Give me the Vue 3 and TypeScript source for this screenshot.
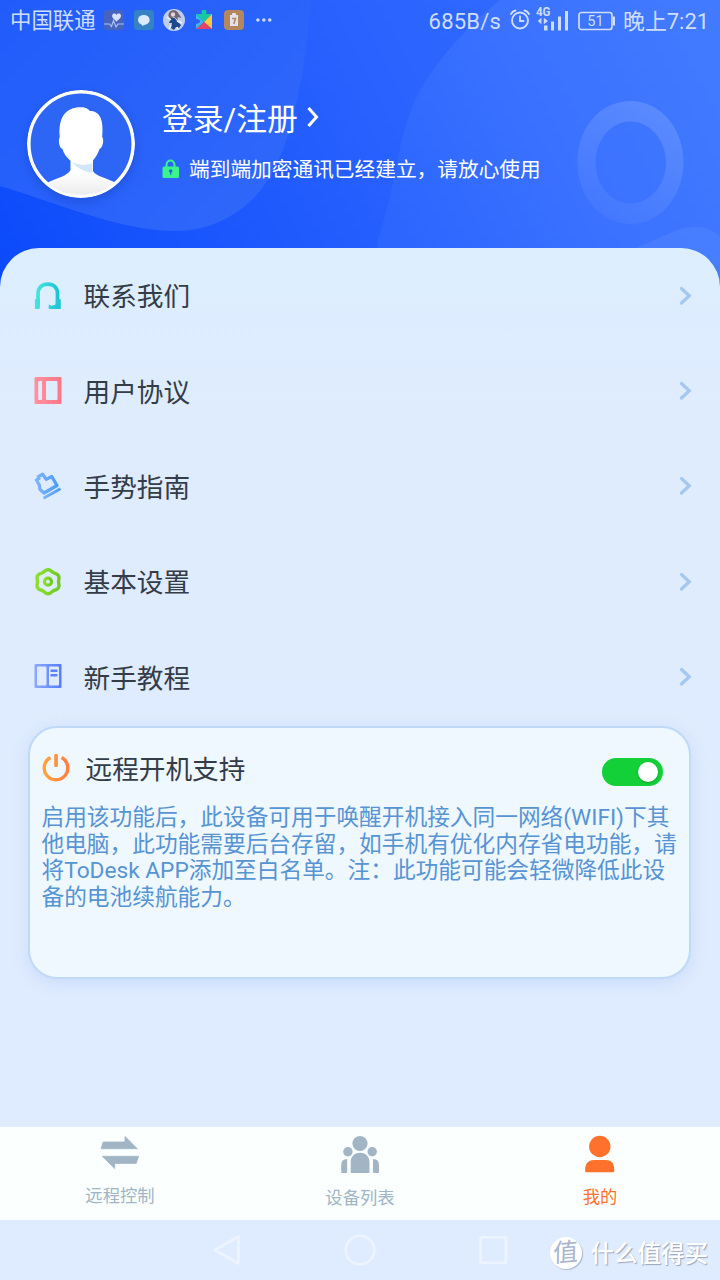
<script setup lang="ts">
interface MenuItem {
  icon: string
  label: string
}

const menu: MenuItem[] = [
  { icon: 'headset', label: '联系我们' },
  { icon: 'agreement', label: '用户协议' },
  { icon: 'gesture', label: '手势指南' },
  { icon: 'settings', label: '基本设置' },
  { icon: 'tutorial', label: '新手教程' },
]

const notice: string[] = [
  '启用该功能后，此设备可用于唤醒开机接入同一网络(WIFI)下其',
  '他电脑，此功能需要后台存留，如手机有优化内存省电功能，请',
  '将ToDesk APP添加至白名单。注：此功能可能会轻微降低此设',
  '备的电池续航能力。',
]

// Six-lobed gear outline around the centre of a 28 unit box.
function gearOutline(): string {
  const points: string[] = []
  for (let deg = 0; deg < 360; deg += 5) {
    const a = (deg * Math.PI) / 180
    const r = 11.3 + 0.75 * Math.cos(6 * a)
    points.push(`${(14 + r * Math.sin(a)).toFixed(2)} ${(13.7 - r * Math.cos(a)).toFixed(2)}`)
  }
  return `M${points.join('L')}Z`
}
const gear = gearOutline()
</script>

<template>
  <div class="screen">
    <header class="header">
      <svg class="backdrop" viewBox="0 0 720 292" aria-hidden="true">
        <defs>
          <linearGradient id="base" gradientUnits="userSpaceOnUse" x1="0" y1="270" x2="560" y2="0">
            <stop offset="0" stop-color="#0c4bfb" />
            <stop offset="0.65" stop-color="#2861fe" />
            <stop offset="1" stop-color="#326bfe" />
          </linearGradient>
          <linearGradient id="leafFill" gradientUnits="userSpaceOnUse" x1="0" y1="0" x2="250" y2="220">
            <stop offset="0" stop-color="#215cfb" />
            <stop offset="1" stop-color="#2f67fa" />
          </linearGradient>
          <linearGradient id="hillFill" gradientUnits="userSpaceOnUse" x1="385" y1="200" x2="690" y2="40">
            <stop offset="0" stop-color="#2c66fe" />
            <stop offset="0.5" stop-color="#3a71ff" />
            <stop offset="1" stop-color="#4179ff" />
          </linearGradient>
          <linearGradient id="ringFill" x1="0.7" y1="0" x2="0.3" y2="1">
            <stop offset="0" stop-color="#fff" stop-opacity="0.15" />
            <stop offset="1" stop-color="#fff" stop-opacity="0.04" />
          </linearGradient>
        </defs>
        <rect width="720" height="292" fill="url(#base)" />
        <path d="M0 0H312C307 30 307 55 300 85C293 120 287 148 269 178C252 207 217 231 176 231C121 231 60 204 0 186Z" fill="url(#leafFill)" />
        <path d="M500 0C465 28 440 58 422 87C397 131 400 170 378 240L372 292H720V0Z" fill="url(#hillFill)" />
        <path fill-rule="evenodd" d="M630.500 101C660 101 683.500 128 683.500 162S660 224 630.500 224S577.500 197 577.500 162S601 101 630.500 101ZM630.500 121.500C611 121.500 595.500 140 595.500 162.500S611 203.500 630.500 203.500S666 185 666 162.500S650 121.500 630.500 121.500Z" fill="url(#ringFill)" />
        <path d="M636 248L670 233Q700 219 720 236V292H636Z" fill="#4c80ff" opacity="0.7" />
      </svg>

      <div class="status">
        <span class="carrier">中国联通</span>
        <div class="notifications">
          <svg viewBox="0 0 20 20">
            <rect width="20" height="20" rx="4" fill="#4664bd" />
            <path d="M12.500 11.500L8.800 8C6.500 4 11 2 12.500 5C14 2 18.800 4 16.300 8Z" fill="#d7e2ff" />
            <path d="M0 14H5.500L7.500 16.500L9.500 10.500L12 17L14 14H20" fill="none" stroke="#a9c0f5" stroke-width="1.200" />
          </svg>
          <svg viewBox="0 0 20 20">
            <rect width="20" height="20" rx="4" fill="#3582c5" />
            <ellipse cx="9.800" cy="9.900" rx="5.800" ry="5" fill="#dceaff" />
            <path d="M7 13.500L8.500 16L12.500 13.500Z" fill="#dceaff" />
          </svg>
          <svg class="portrait" viewBox="0 0 22 22">
            <circle cx="11" cy="11" r="11" fill="#bfcfe9" />
            <path d="M5.500 7C5 1 12 -0.500 14.500 3L18.500 9L14.500 8L15 11L11 8L7 10Z" fill="#6f6470" />
            <circle cx="10" cy="5.500" r="2.200" fill="#e5d2da" />
            <path d="M8 9L11.500 9L14 12L18 16L16 19L13 18L11 21L8 19L9 14L6 14Z" fill="#1c4791" />
            <path d="M4 8L8 11M14 12L19 14M8 16L6 20M14 18L15 20.500" stroke="#f0f3ff" stroke-width="1.500" />
          </svg>
          <svg viewBox="0 0 20 20">
            <path d="M2 4H8Q6.500 -0.500 10 -0.500T12 4H18L10 12Z" fill="#17c9a0" />
            <path d="M2 4L10 12L2 19V14Q6 13.500 6 11.300T2 9Z" fill="#3abbf0" />
            <path d="M18 4V19L10 12Z" fill="#ffc83e" />
            <path d="M2 19L10 12L18 19Z" fill="#e44466" />
          </svg>
          <svg viewBox="0 0 20 20">
            <rect width="20" height="20" rx="4" fill="#b4875f" />
            <path d="M6 5H14V16H6Z" fill="#e3e3ef" />
            <rect x="8" y="3" width="4" height="3" rx="1" fill="#e3e3ef" />
            <path d="M8 8.500H11.500L9.800 14" fill="none" stroke="#b4875f" stroke-width="1.600" />
          </svg>
          <svg class="more" viewBox="0 0 16 20">
            <g fill="#c9d9ff"><circle cx="1.900" cy="10" r="1.800" /><circle cx="7.800" cy="10" r="1.800" /><circle cx="13.700" cy="10" r="1.800" /></g>
          </svg>
        </div>
        <div class="signals">
          <span class="speed">685B/s</span>
          <svg class="alarm" viewBox="0 0 20 22">
            <g fill="none" stroke="#cfddff" stroke-width="1.900" stroke-linecap="round">
              <circle cx="10" cy="11.500" r="8" /><path d="M10 7.500V12H13.500M1 5Q2.500 2 5.500 1.500M19 5Q17.500 2 14.500 1.500" />
            </g>
          </svg>
          <svg class="cell" viewBox="0 0 34 28">
            <text x="0" y="10.500" class="network" textLength="14.500" lengthAdjust="spacingAndGlyphs">4G</text>
            <path d="M8 20.500H11.500V25.500H8ZM15 16.500H18V25.500H15ZM22 11.500H25V25.500H22ZM29 6H32V25.500H29Z" fill="#cfddff" />
            <path d="M1.800 16L5.400 12.800V19.200ZM12 16L7.800 12.800V19.200Z" fill="#cfddff" />
          </svg>
          <svg class="battery" viewBox="0 0 38 20">
            <rect x="1" y="1.500" width="33" height="17" rx="2.500" fill="none" stroke="#cfddff" stroke-width="1.700" />
            <path d="M35 5.500H37V14.500H35Z" fill="#cfddff" />
            <text x="17.500" y="15.200" class="charge" text-anchor="middle">51</text>
          </svg>
          <span class="clock">晚上7:21</span>
        </div>
      </div>

      <div class="profile">
        <svg class="avatar" viewBox="0 0 108 108">
          <defs>
            <clipPath id="face"><circle cx="54" cy="54" r="51" /></clipPath>
            <linearGradient id="bust" x1="0" y1="0" x2="0" y2="1"><stop offset="0.4" stop-color="#fff" /><stop offset="1" stop-color="#e9e9eb" /></linearGradient>
          </defs>
          <circle cx="54" cy="54" r="52" fill="#2d66f5" />
          <g clip-path="url(#face)">
            <path d="M43.500 66V80C41 86 29 88 20 93V108H89V93C80 88 68 86 66 81V66Z" fill="url(#bust)" />
            <path d="M45 72Q56 77 65.500 73V83Q52 81 45 72Z" fill="#d1e8fa" />
            <path d="M32.800 47C31 28 38 17.300 54 17.300C59 17.300 61 19 63 21C72 21 77 28 75.200 47C77.500 50 75.500 58 72.500 59C69.500 68 64 74.500 56 74.500C46 74.500 38 68 35.500 59C32 58 31 50 32.800 47Z" fill="#fff" />
          </g>
          <circle cx="54" cy="54" r="52.200" fill="none" stroke="#fff" stroke-width="3.600" />
        </svg>
        <div class="account">
          <div class="login">
            <span>登录/注册</span>
            <svg viewBox="0 0 14 22"><path d="M2.500 2L10.500 11L2.500 20" fill="none" stroke="#fff" stroke-width="3" /></svg>
          </div>
          <div class="secure">
            <svg viewBox="0 0 18 20">
              <path d="M4.500 9V6C4.500 0 12.500 0 12.500 6V9" fill="none" stroke="#38f48b" stroke-width="2" />
              <rect x="0.500" y="7.500" width="16.500" height="11.500" rx="1.500" fill="#38f48b" />
              <circle cx="8.700" cy="12" r="1.700" fill="#265de5" /><path d="M8.200 12H9.300V16H8.200Z" fill="#265de5" />
            </svg>
            <span>端到端加密通讯已经建立，请放心使用</span>
          </div>
        </div>
      </div>
    </header>

    <main class="panel">
      <div v-for="item in menu" :key="item.icon" class="row">
        <svg v-if="item.icon === 'headset'" class="icon" viewBox="0 0 28 28">
          <defs><linearGradient id="teal"><stop offset="0" stop-color="#46e2df" /><stop offset="1" stop-color="#1cc5d5" /></linearGradient></defs>
          <path d="M4 24V12C4 5.500 8 2.100 13.800 2.100S23.500 5.500 23.500 12V24" fill="none" stroke="url(#teal)" stroke-width="3.700" />
          <path d="M0.900 18Q0.900 17 2 17H5.800V26Q5.800 27 4.800 27H0.900ZM21.800 17H25.700Q26.700 17 26.700 18V27H14.700V22.500L17.500 23.700L21.800 22.500Z" fill="url(#teal)" />
        </svg>
        <svg v-else-if="item.icon === 'agreement'" class="icon" viewBox="0 0 28 28">
          <defs><linearGradient id="pink"><stop offset="0" stop-color="#ff929f" /><stop offset="1" stop-color="#ff7686" /></linearGradient></defs>
          <path fill-rule="evenodd" d="M1.500 0H26.500Q27.500 0 27.500 1V26Q27.500 27 26.500 27H1.500Q0.500 27 0.500 26V1Q0.500 0 1.500 0ZM5.200 4Q4.200 4 4.200 5V22Q4.200 23 5.200 23H7Q8 23 8 22V5Q8 4 7 4ZM13 4Q12 4 12 5V22Q12 23 13 23H22.500Q23.500 23 23.500 22V5Q23.500 4 22.500 4Z" fill="url(#pink)" />
        </svg>
        <svg v-else-if="item.icon === 'gesture'" class="icon" viewBox="0 0 28 28">
          <defs><linearGradient id="blue"><stop offset="0" stop-color="#7fb4fc" /><stop offset="1" stop-color="#4d9cfd" /></linearGradient></defs>
          <path d="M8.600 2.300L4.300 4.700L5 6.500L2.400 8L5.400 13.300L5.800 17.200L10 21L23 13.500L17.700 4.500L12.200 7.400Z" fill="none" stroke="url(#blue)" stroke-width="3.300" stroke-linejoin="round" />
          <path d="M9.500 26.300L26.500 16.700" fill="none" stroke="url(#blue)" stroke-width="3" />
        </svg>
        <svg v-else-if="item.icon === 'settings'" class="icon" viewBox="0 0 28 28">
          <defs><linearGradient id="green"><stop offset="0" stop-color="#8be02d" /><stop offset="1" stop-color="#70cc21" /></linearGradient></defs>
          <path :d="gear" fill="none" stroke="url(#green)" stroke-width="3.400" />
          <circle cx="14" cy="13.700" r="3.500" fill="none" stroke="url(#green)" stroke-width="3.200" />
        </svg>
        <svg v-else class="icon" viewBox="0 0 28 28">
          <defs><linearGradient id="violet"><stop offset="0" stop-color="#8ba9ff" /><stop offset="1" stop-color="#557cff" /></linearGradient></defs>
          <path fill-rule="evenodd" d="M1.500 1H26.500Q27.500 1 27.500 2V24Q27.500 25 26.500 25H1.500Q0.500 25 0.500 24V2Q0.500 1 1.500 1ZM4 3.500Q3 3.500 3 4.500V21.500Q3 22.500 4 22.500H11.500Q12.500 22.500 12.500 21.500V4.500Q12.500 3.500 11.500 3.500ZM16 3.500Q15 3.500 15 4.500V21.500Q15 22.500 16 22.500H24Q25 22.500 25 21.500V4.500Q25 3.500 24 3.500Z" fill="url(#violet)" />
          <path d="M16.500 7.700H23.500M16.500 12.300H23.500" stroke="#5d82fd" stroke-width="2.500" />
        </svg>
        <span class="label">{{ item.label }}</span>
        <svg class="chevron" viewBox="0 0 14 20"><path d="M2.500 2.500L10.300 9.700L2.500 17" fill="none" stroke="#a4c8ef" stroke-width="3.300" stroke-linecap="round" /></svg>
      </div>

      <section class="card">
        <div class="cardhead">
          <svg class="power" viewBox="0 0 28 28">
            <defs><linearGradient id="orange"><stop offset="0" stop-color="#ffa33b" /><stop offset="1" stop-color="#ff7f45" /></linearGradient></defs>
            <path d="M8.400 3.600A11.800 11.800 0 1 0 19.600 3.600" fill="none" stroke="url(#orange)" stroke-width="3.400" />
            <rect x="12.200" y="0" width="3.700" height="13" rx="1" fill="#ff9140" />
          </svg>
          <span class="label">远程开机支持</span>
          <span class="toggle"><i></i></span>
        </div>
        <p class="notice"><span v-for="line in notice" :key="line">{{ line }}</span></p>
      </section>
    </main>

    <nav class="tabs">
      <div class="tab remote">
        <svg viewBox="0 0 60 40"><path d="M11 13.700L13.200 7H35V1.500L47.300 13.700ZM12.300 21.300H48.500L46.200 28.400H24.700V33.500Z" fill="#a1b5c5" stroke="#a1b5c5" stroke-width="0.800" stroke-linejoin="round" /></svg>
        <span>远程控制</span>
      </div>
      <div class="tab devices">
        <svg viewBox="0 0 60 40">
          <g fill="#a1b5c5">
            <circle cx="30" cy="8.500" r="7.600" /><circle cx="17.900" cy="16.800" r="4.700" /><circle cx="42.200" cy="16.800" r="4.700" />
            <path d="M20.700 37V27C20.700 14.500 39.500 14.500 39.500 27V37Q39.500 38 38.500 38H21.700Q20.700 38 20.700 37ZM11.200 37V30Q11.200 24 17.200 24V37Q17.200 38 16 38H12.200Q11.200 38 11.200 37ZM49 37V30Q49 24 43 24V37Q43 38 44 38H48Q49 38 49 37Z" />
          </g>
        </svg>
        <span>设备列表</span>
      </div>
      <div class="tab mine">
        <svg viewBox="0 0 60 40"><g fill="#ff712c"><circle cx="29.800" cy="11.500" r="10.700" /><path d="M15.200 36V34C15.200 28 19 25 24 25H35.500C41 25 44.200 28 44.200 34V36Q44.200 37.200 43 37.200H16.500Q15.200 37.200 15.200 36Z" /></g></svg>
        <span>我的</span>
      </div>
    </nav>

    <footer class="system">
      <svg class="keys" viewBox="0 0 720 60">
        <g fill="none" stroke="#edf4ff" stroke-width="2.600" stroke-linejoin="round">
          <path d="M238.500 16.500V43.500L214.800 30Z" /><circle cx="360" cy="30" r="14.300" /><rect x="480.500" y="17.300" width="25.500" height="25.500" rx="1.500" />
        </g>
      </svg>
      <div class="brand"><span class="seal"><b>值</b></span><span class="name">什么值得买</span></div>
    </footer>
  </div>
</template>

<style>
body {
  margin: 0;
}
</style>

<style scoped>
.screen {
  width: 720px;
  height: 1280px;
  display: flex;
  flex-direction: column;
  overflow: hidden;
  background: #dfebfe;
  font-family: Roboto, "Noto Sans CJK SC", sans-serif;
  font-weight: 400;
  white-space: nowrap;
}
svg {
  display: block;
  flex: none;
}
.header {
  position: relative;
  height: 292px;
  flex: none;
  color: #fff;
}
.backdrop {
  position: absolute;
  inset: 0;
  width: 720px;
  height: 292px;
}
.status {
  position: relative;
  height: 40px;
  padding: 0 11px 0 10px;
  display: flex;
  align-items: center;
  color: #cfddff;
  font-size: 21.4px;
}
.carrier {
  line-height: 40px;
  padding-top: 2px;
}
.notifications {
  display: flex;
  align-items: center;
  gap: 10px;
  margin-left: 8px;
}
.notifications svg {
  width: 20px;
  height: 20px;
}
.notifications .portrait {
  width: 22px;
  height: 22px;
  margin: 0 -1px;
}
.notifications .more {
  width: 16px;
  margin-left: 2px;
}
.signals {
  display: flex;
  align-items: center;
  margin-left: auto;
}
.speed {
  font-size: 22px;
  letter-spacing: 0.2px;
  line-height: 42px;
  padding-top: 3px;
}
.alarm {
  width: 20px;
  height: 22px;
  margin-left: 9px;
}
.cell {
  width: 34px;
  height: 28px;
  margin: -2px 0 0 6px;
}
.network {
  fill: #cfddff;
  font-size: 12px;
  font-weight: 700;
}
.battery {
  width: 38px;
  height: 20px;
  margin: 1px 0 0 8px;
}
.charge {
  fill: #cfddff;
  font-size: 14.5px;
}
.clock {
  margin-left: 7px;
  padding-top: 3px;
  line-height: 40px;
  font-size: 21.9px;
}
.profile {
  position: relative;
  display: flex;
  padding: 50px 0 0 27px;
}
.avatar {
  width: 108px;
  height: 108px;
  border-radius: 50%;
  box-shadow: 0 4px 10px rgba(15, 50, 150, 0.3);
}
.account {
  margin-left: 27px;
}
.login {
  display: flex;
  align-items: center;
  height: 52px;
  margin-bottom: 2px;
  font-size: 30.8px;
}
.login svg {
  width: 14px;
  height: 22px;
  margin: 1px 0 0 8px;
}
.secure {
  display: flex;
  align-items: center;
  height: 48px;
  font-size: 20.7px;
}
.secure svg {
  width: 18px;
  height: 20px;
  margin: 1px 9px 0 0;
}
.panel {
  position: relative;
  height: 879px;
  margin-top: -44px;
  flex: none;
  box-sizing: border-box;
  border-radius: 39px 39px 0 0;
  background: linear-gradient(180deg, #dceeff 0, #dfecfe 180px, #dfebfe 100%);
}
.row {
  display: flex;
  align-items: center;
  height: 95.4px;
  padding: 0 27px 0 33.5px;
}
.icon {
  width: 28px;
  height: 28px;
}
.label {
  margin-left: 22px;
  padding-top: 3px;
  font-size: 26.67px;
  line-height: 40px;
  color: #343c48;
}
.chevron {
  width: 14px;
  height: 20px;
  margin-left: auto;
}
.card {
  box-sizing: border-box;
  width: 663px;
  height: 253px;
  margin: 1px 0 0 28px;
  padding: 20px 0 0 11.5px;
  border: 2px solid #bfd9f7;
  border-radius: 29px;
  background: #eff7ff;
  box-shadow: 0 4px 16px rgba(130, 170, 245, 0.22);
}
.cardhead {
  display: flex;
  align-items: center;
  height: 40px;
}
.power {
  width: 28px;
  height: 28px;
}
.cardhead .label {
  margin-left: 16px;
  padding-top: 4px;
}
.toggle {
  box-sizing: border-box;
  display: flex;
  justify-content: flex-end;
  width: 61px;
  height: 28px;
  margin: 8px 26px 0 auto;
  padding: 4px 5px;
  border-radius: 14px;
  background: #13cf38;
}
.toggle i {
  width: 20px;
  height: 20px;
  border-radius: 50%;
  background: #fff;
  box-shadow: 0 1px 2px rgba(0, 70, 0, 0.3);
}
.notice {
  display: flex;
  flex-direction: column;
  margin: 17px 0 0;
  color: #5694d3;
  font-size: 22.7px;
  line-height: 26.7px;
}
.tabs {
  display: grid;
  grid-template-columns: repeat(3, 1fr);
  height: 93px;
  flex: none;
  background: #fbfffe;
}
.tab {
  display: flex;
  flex-direction: column;
  align-items: center;
  padding-top: 8px;
  color: #a1b5c5;
  font-size: 17.33px;
  line-height: 26px;
}
.tab svg {
  width: 60px;
  height: 40px;
}
.tab span {
  margin-top: 10px;
}
.tab.remote span {
  margin-top: 8px;
}
.mine {
  color: #ff712c;
}
.tab.mine span {
  margin-top: 9px;
}
.system {
  position: relative;
  height: 60px;
  flex: none;
  background: #dfebfe;
}
.keys {
  width: 720px;
  height: 60px;
}
.brand {
  position: absolute;
  right: 12px;
  top: 13px;
  height: 40px;
  display: flex;
  align-items: center;
  color: #fff;
  font-size: 23.5px;
}
.seal {
  width: 32px;
  height: 32px;
  display: flex;
  align-items: center;
  justify-content: center;
  border-radius: 50%;
  background: #fff;
  box-shadow: 1px 1px 1px #aeb8cb;
}
.seal b {
  font-size: 25px;
  line-height: 32px;
  font-weight: 400;
  color: #a9b6ce;
  transform: rotate(-5deg) skewX(-6deg);
}
.name {
  margin: -2px 0 0 9px;
  font-weight: 500;
  text-shadow: 1px 1px 1px #99a5bb;
}
</style>
